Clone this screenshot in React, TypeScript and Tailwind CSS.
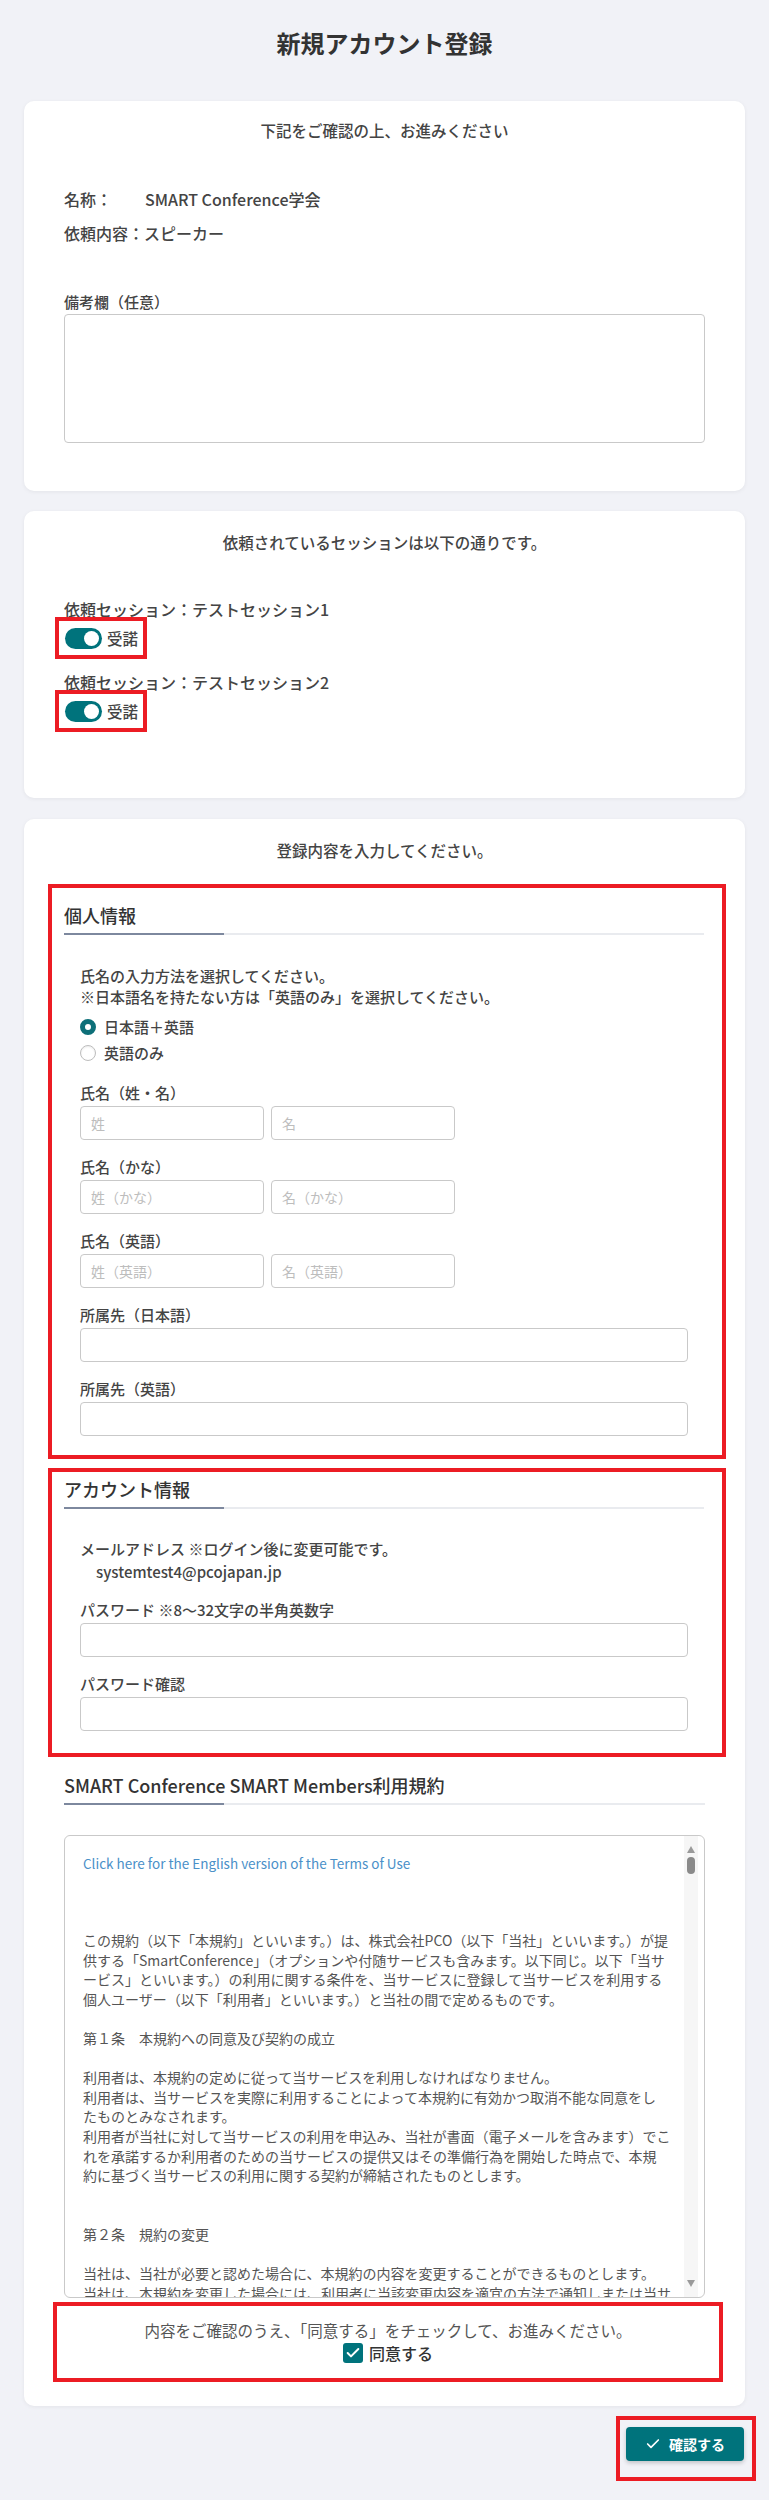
import { Check } from "lucide-react";

const TEAL = "bg-[#00737c]";

function SectionTitle({ children }: { children: React.ReactNode }) {
  return (
    <div>
      <div className="text-[18px] leading-[26px] font-medium text-[#333]">{children}</div>
      <div className="mt-[5px] flex h-[2px] bg-[#e9ebef]">
        <div className="h-full w-[160px] bg-[#7d889e]" />
      </div>
    </div>
  );
}

function Field({ label, children }: { label: string; children: React.ReactNode }) {
  return (
    <div className="mt-4">
      <div className="text-[15px] leading-[22px] font-medium text-[#444]">{label}</div>
      <div className="mt-[2px]">{children}</div>
    </div>
  );
}

function Input({ placeholder, half }: { placeholder?: string; half?: boolean }) {
  return (
    <input
      placeholder={placeholder}
      className={
        (half ? "w-[184px] " : "w-full ") +
        "h-[34px] rounded-[4px] border border-[#c9c9c9] bg-white px-[10px] text-[14px] text-[#333] outline-none placeholder:text-[#bdbdbd]"
      }
    />
  );
}

function Toggle() {
  return (
    <div className="-ml-[9px] inline-flex h-[42px] items-center border-4 border-[#ec1c24] pl-[6px] pr-[5px]">
      <div className={"flex h-[21px] w-[37px] items-center justify-end rounded-full pr-[3px] " + TEAL}>
        <div className="h-[15px] w-[15px] rounded-full bg-white" />
      </div>
      <span className="ml-[5px] text-[15.5px] leading-[22px] font-medium text-[#444]">受諾</span>
    </div>
  );
}

const terms: string[] = [
  "この規約（以下「本規約」といいます。）は、株式会社PCO（以下「当社」といいます。）が提",
  "供する「SmartConference」（オプションや付随サービスも含みます。以下同じ。以下「当サ",
  "ービス」といいます。）の利用に関する条件を、当サービスに登録して当サービスを利用する",
  "個人ユーザー（以下「利用者」といいます。）と当社の間で定めるものです。",
  "",
  "第１条　本規約への同意及び契約の成立",
  "",
  "利用者は、本規約の定めに従って当サービスを利用しなければなりません。",
  "利用者は、当サービスを実際に利用することによって本規約に有効かつ取消不能な同意をし",
  "たものとみなされます。",
  "利用者が当社に対して当サービスの利用を申込み、当社が書面（電子メールを含みます）でこ",
  "れを承諾するか利用者のための当サービスの提供又はその準備行為を開始した時点で、本規",
  "約に基づく当サービスの利用に関する契約が締結されたものとします。",
  "",
  "",
  "第２条　規約の変更",
  "",
  "当社は、当社が必要と認めた場合に、本規約の内容を変更することができるものとします。",
  "当社は、本規約を変更した場合には、利用者に当該変更内容を適宜の方法で通知しまたは当サ",
  "ービス上に掲示するものとします。",
];

export default function App() {
  return (
    <div className="min-h-screen bg-[#f1f2f7] pb-[17px] font-['Noto_Sans_CJK_JP','Noto_Sans',sans-serif] text-[#333]">
      <h1 className="pt-[27px] text-center text-[24px] leading-[32px] font-bold text-[#333]">新規アカウント登録</h1>

      {/* card 1 */}
      <div className="mx-6 mt-[42px] rounded-[10px] bg-white px-10 pt-[17px] pb-[48px] shadow-[0_1px_4px_rgba(0,0,0,0.06)]">
        <div className="text-center text-[15.5px] leading-6 font-medium text-[#444]">下記をご確認の上、お進みください</div>
        <div className="mt-[45px] flex text-[16px] leading-6 font-medium text-[#444]">
          <span className="w-[81px]">名称：</span>
          <span>SMART Conference学会</span>
        </div>
        <div className="mt-[10px] text-[16px] leading-6 font-medium text-[#444]">依頼内容：スピーカー</div>
        <div className="mt-[46px] text-[15px] leading-[22px] font-medium text-[#444]">備考欄（任意）</div>
        <textarea className="mt-px block h-[129px] w-full resize-none rounded-[4px] border border-[#c9c9c9] outline-none" />
      </div>

      {/* card 2 */}
      <div className="mx-6 mt-5 rounded-[10px] bg-white px-10 pt-[19px] pb-[66px] shadow-[0_1px_4px_rgba(0,0,0,0.06)]">
        <div className="text-center text-[15.5px] leading-6 font-medium text-[#444]">依頼されているセッションは以下の通りです。</div>
        <div className="mt-[47px] text-[16px] leading-4 font-medium text-[#444]">依頼セッション：テストセッション1</div>
        <Toggle />
        <div className="mt-[15px] text-[16px] leading-4 font-medium text-[#444]">依頼セッション：テストセッション2</div>
        <Toggle />
      </div>

      {/* card 3 */}
      <div className="mx-6 mt-[21px] rounded-[10px] bg-white pt-[19px] pb-6 shadow-[0_1px_4px_rgba(0,0,0,0.06)]">
        <div className="text-center text-[15.5px] leading-6 font-medium text-[#444]">登録内容を入力してください。</div>

        <div className="mt-[22px] ml-6 mr-[19px] border-4 border-[#ec1c24] pt-[14px] pr-[18px] pb-[19px] pl-3">
          <SectionTitle>個人情報</SectionTitle>
          <div className="px-4">
            <div className="mt-[30px] text-[15px] leading-[21px] font-medium text-[#444]">
              <div>氏名の入力方法を選択してください。</div>
              <div>※日本語名を持たない方は「英語のみ」を選択してください。</div>
            </div>
            <div className="mt-[7px]">
              <div className="flex h-[26px] items-center">
                <span className="h-4 w-4 rounded-full border-[5px] border-[#0d6f78] bg-white" />
                <span className="ml-[8px] text-[15px] font-medium text-[#444]">日本語＋英語</span>
              </div>
              <div className="flex h-[26px] items-center">
                <span className="h-4 w-4 rounded-full border border-[#bdbdbd] bg-white shadow-[inset_0_1px_2px_rgba(0,0,0,0.08)]" />
                <span className="ml-[8px] text-[15px] font-medium text-[#444]">英語のみ</span>
              </div>
            </div>
            <Field label="氏名（姓・名）">
              <div className="flex gap-[7px]">
                <Input half placeholder="姓" />
                <Input half placeholder="名" />
              </div>
            </Field>
            <Field label="氏名（かな）">
              <div className="flex gap-[7px]">
                <Input half placeholder="姓（かな）" />
                <Input half placeholder="名（かな）" />
              </div>
            </Field>
            <Field label="氏名（英語）">
              <div className="flex gap-[7px]">
                <Input half placeholder="姓（英語）" />
                <Input half placeholder="名（英語）" />
              </div>
            </Field>
            <Field label="所属先（日本語）">
              <Input />
            </Field>
            <Field label="所属先（英語）">
              <Input />
            </Field>
          </div>
        </div>

        <div className="mt-[9px] ml-6 mr-[19px] border-4 border-[#ec1c24] pt-1 pr-[18px] pb-[22px] pl-3">
          <SectionTitle>アカウント情報</SectionTitle>
          <div className="px-4">
            <div className="mt-[29px] text-[15px] leading-[22px] font-medium text-[#444]">メールアドレス ※ログイン後に変更可能です。</div>
            <div className="mt-px pl-4 text-[15px] leading-[22px] font-medium text-[#444]">systemtest4@pcojapan.jp</div>
            <Field label="パスワード ※8～32文字の半角英数字">
              <Input />
            </Field>
            <Field label="パスワード確認">
              <Input />
            </Field>
          </div>
        </div>

        <div className="mx-10 mt-[15px]">
          <SectionTitle>SMART Conference SMART Members利用規約</SectionTitle>
          <div className="mt-[30px] flex h-[463px] overflow-hidden rounded-[6px] border border-[#c9c9c9] pr-[6px]">
            <div className="flex-1 overflow-hidden pt-[17px] pl-[18px]">
              <div className="text-[13.5px] leading-5 text-[#4a90c8]">Click here for the English version of the Terms of Use</div>
              <div className="mt-[58px] text-[14px] leading-[19.6px] text-[#555]">
                {terms.map((t, i) => (
                  <div key={i} className="h-[19.6px] whitespace-nowrap">
                    {t}
                  </div>
                ))}
              </div>
            </div>
            <div className="flex w-[14px] flex-col items-center bg-[#f6f6f6] pt-[10px] pb-[10px]">
              <div className="h-0 w-0 border-x-[4px] border-b-[7px] border-x-transparent border-b-[#9a9a9a]" />
              <div className="mt-[4px] h-[17px] w-[8px] rounded-full bg-[#8a8a8a]" />
              <div className="flex-1" />
              <div className="h-0 w-0 border-x-[4px] border-t-[7px] border-x-transparent border-t-[#9a9a9a]" />
            </div>
          </div>
        </div>

        <div className="mt-[4px] ml-[29px] mr-[22px] border-4 border-[#ec1c24] pt-[13px] pb-[13px] text-center">
          <div className="text-[15.5px] leading-[22px] text-[#555]">内容をご確認のうえ、「同意する」をチェックして、お進みください。</div>
          <div className="flex h-6 items-center justify-center">
            <span className={"flex h-5 w-5 items-center justify-center rounded-[3px] " + TEAL}>
              <Check className="h-4 w-4 text-white" strokeWidth={3} />
            </span>
            <span className="ml-[6px] text-[16px] font-medium text-[#333]">同意する</span>
          </div>
        </div>
      </div>

      <div className="mt-[10px] mr-[13px] flex justify-end">
        <div className="border-4 border-[#ec1c24] pt-[7px] pr-[8px] pb-[16px] pl-[6px]">
          <button className={"flex h-[34px] w-[118px] items-center justify-center gap-[8px] rounded-[4px] text-[14px] font-bold text-white shadow-[0_2px_4px_rgba(0,0,0,0.2)] " + TEAL}>
            <Check className="h-4 w-4" strokeWidth={2.5} />
            確認する
          </button>
        </div>
      </div>
    </div>
  );
}
